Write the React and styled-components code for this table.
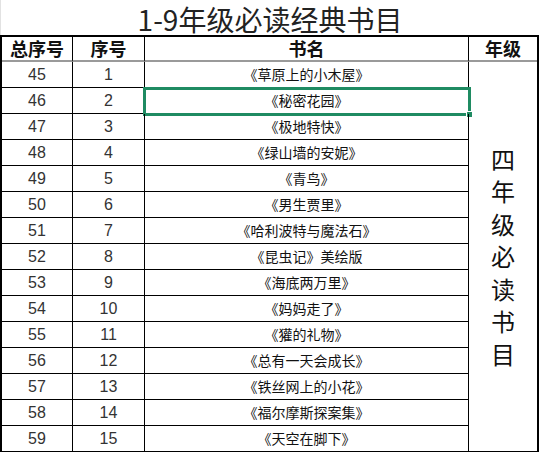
import React from 'react';
import styled, { createGlobalStyle } from 'styled-components';

const GlobalStyle = createGlobalStyle`
  html, body {
    margin: 0;
    padding: 0;
    background: #fff;
    overflow: hidden;
  }
  body {
    font-family: "Noto Sans CJK SC", "Liberation Sans", sans-serif;
    color: #111;
  }
`;

const books = [
  '《草原上的小木屋》',
  '《秘密花园》',
  '《极地特快》',
  '《绿山墙的安妮》',
  '《青鸟》',
  '《男生贾里》',
  '《哈利波特与魔法石》',
  '《昆虫记》美绘版',
  '《海底两万里》',
  '《妈妈走了》',
  '《獾的礼物》',
  '《总有一天会成长》',
  '《铁丝网上的小花》',
  '《福尔摩斯探案集》',
  '《天空在脚下》',
];

const Page = styled.div`
  width: 541px;
`;

const Title = styled.div`
  height: 35px;
  width: 539px;
  display: flex;
  align-items: center;
  justify-content: center;
  font-size: 28px;
  font-weight: 400;
  line-height: 32px;
  color: #222;
  border-left: 1px solid #e2e2e2;
  box-sizing: border-box;
  padding-top: 2px;
`;

const Table = styled.table`
  border-collapse: separate;
  border-spacing: 0;
  table-layout: fixed;
  width: 539px;
  border: 2px solid #000;
`;

const Head = styled.th`
  height: 23px;
  padding: 0;
  font-size: 18px;
  font-weight: bold;
  line-height: 23px;
  text-align: center;
  color: #111;
  border-right: ${(p) => (p.$last ? 'none' : '1px solid #000')};
  border-bottom: 2px solid #9a9a9a;
`;

const Cell = styled.td`
  height: 25px;
  padding: 0;
  text-align: center;
  line-height: 25px;
  border-right: 1px solid #000;
  border-bottom: ${(p) => (p.$last ? 'none' : '1px solid #000')};
  font-size: ${(p) => (p.$num ? '16px' : '14px')};
  font-family: ${(p) =>
    p.$num ? '"Liberation Sans", Arial, sans-serif' : '"Noto Sans CJK SC", sans-serif'};
  color: ${(p) => (p.$num ? '#333' : '#111')};
  position: relative;
  white-space: nowrap;
`;

const GradeCell = styled.td`
  padding: 0;
  text-align: center;
  vertical-align: middle;
`;

const VerticalText = styled.div`
  width: 1em;
  margin: 0 auto;
  font-size: 24px;
  line-height: 32.5px;
  color: #111;
`;

const Selection = styled.div`
  position: absolute;
  top: -1px;
  left: -2px;
  right: -3px;
  bottom: -3px;
  border: 3px solid #1f8b62;
  pointer-events: none;
`;

const Handle = styled.div`
  position: absolute;
  right: -5px;
  bottom: -5px;
  width: 5px;
  height: 5px;
  background: #1f8b62;
  border: 1px solid #fff;
`;

export default function App() {
  return (
    <Page>
      <GlobalStyle />
      <Title>1-9年级必读经典书目</Title>
      <Table>
        <colgroup>
          <col style={{ width: 71 }} />
          <col style={{ width: 72 }} />
          <col style={{ width: 324 }} />
          <col style={{ width: 68 }} />
        </colgroup>
        <thead>
          <tr>
            <Head>总序号</Head>
            <Head>序号</Head>
            <Head>书名</Head>
            <Head $last>年级</Head>
          </tr>
        </thead>
        <tbody>
          {books.map((name, i) => {
            const last = i === books.length - 1;
            return (
              <tr key={name}>
                <Cell $num $last={last}>{45 + i}</Cell>
                <Cell $num $last={last}>{i + 1}</Cell>
                <Cell $last={last}>
                  {name}
                  {i === 1 && (
                    <Selection>
                      <Handle />
                    </Selection>
                  )}
                </Cell>
                {i === 0 && (
                  <GradeCell rowSpan={books.length}>
                    <VerticalText>四年级必读书目</VerticalText>
                  </GradeCell>
                )}
              </tr>
            );
          })}
        </tbody>
      </Table>
    </Page>
  );
}
